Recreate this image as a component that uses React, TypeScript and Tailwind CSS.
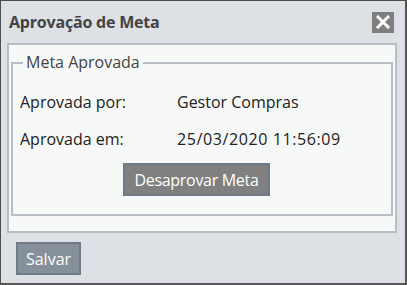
import React from 'react';

const font = { fontFamily: '"Open Sans", "Noto Sans", sans-serif' };

export default function App() {
  return (
    <div
      className="w-[407px] h-[285px] bg-[#dde0e4] border-l border-t border-[#4d4d4d] border-r-2 border-b-2 border-r-[#555] border-b-[#555] flex flex-col"
      style={font}
    >
      <div className="h-[42px] flex items-center justify-between pl-[8px] pr-[11px]">
        <span className="text-[16px] font-bold text-[#444] tracking-[-0.2px]">Aprovação de Meta</span>
        <button className="w-[22px] h-[21px] bg-[#7f7f7f] flex items-center justify-center">
          <svg width="14" height="14" viewBox="0 0 14 14">
            <path d="M2 2 L12 12 M12 2 L2 12" stroke="white" strokeWidth="3" strokeLinecap="square" />
          </svg>
        </button>
      </div>

      <div className="ml-[6px] w-[390px] h-[190px] border-2 border-[#b7bfc5] bg-[#f7f9f9] px-[2px]">
        <fieldset className="border-2 border-[#b7bfc5] h-[164px] mt-[7px] px-[7px]">
          <legend className="ml-[3px] px-[3px] text-[16px] text-[#444] leading-[21px]">Meta Aprovada</legend>
          <div className="grid grid-cols-[157px_1fr] gap-y-[15px] mt-[18px] text-[16px] text-[#222] leading-[22px]">
            <span>Aprovada por:</span>
            <span>Gestor Compras</span>
            <span>Aprovada em:</span>
            <span className="tracking-[0.6px]">25/03/2020 11:56:09</span>
          </div>
          <div className="mt-[13px] pl-[103px]">
            <button className="h-[33px] w-[147px] bg-[#808080] border-2 border-[#6e7a85] text-white text-[16px] tracking-[-0.3px]">
              Desaprovar Meta
            </button>
          </div>
        </fieldset>
      </div>

      <div className="pt-[9px] pl-[15px]">
        <button className="h-[33px] w-[65px] bg-[#85909b] border-2 border-[#6f7c88] text-white text-[16px]">
          Salvar
        </button>
      </div>
    </div>
  );
}
